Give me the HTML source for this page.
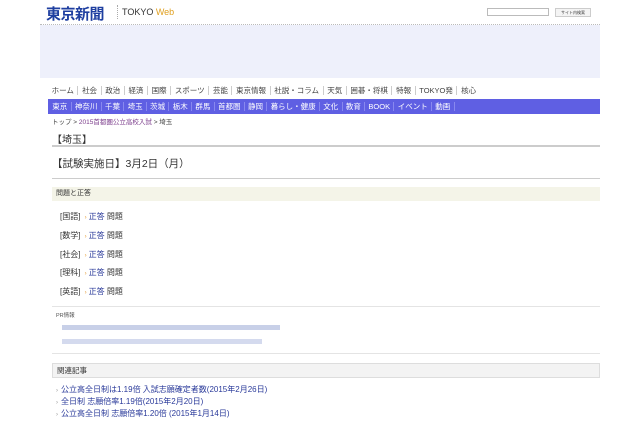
<!DOCTYPE html>
<html><head><meta charset="utf-8"><style>
*{margin:0;padding:0;box-sizing:border-box}
body{width:640px;height:426px;background:#fff;font-family:"Liberation Sans","Noto Sans CJK JP",sans-serif;color:#333;position:relative;overflow:hidden}
.a{position:absolute}
.nav span{padding:0 3.6px;border-right:1px solid #ccc}
.bar span{padding:0 3.3px;border-right:1px solid #8888ee;color:#fff}
.row{position:absolute;left:60px;font-size:8px;color:#333}
.row b{font-weight:normal;color:#2a3a9a}
.row i{font-style:normal;color:#e6a040;font-size:6px;margin:0 2px}
.rl{position:absolute;left:56px;font-size:8px;color:#2a3a9a}
.rl i{font-style:normal;color:#999;font-size:6px;margin-right:3px}
.blur{position:absolute;height:5px;background:#c8d0e8}
</style></head><body>
<div class="a" style="left:46px;top:3px;font-size:15px;font-weight:bold;color:#1f3fa0;letter-spacing:-0.5px">東京新聞</div>
<div class="a" style="left:117px;top:5px;height:14px;border-left:1px dotted #aaa"></div>
<div class="a" style="left:122px;top:7px;font-size:9px;color:#333">TOKYO <span style="color:#e0a020">Web</span></div>
<div class="a" style="left:487px;top:8px;width:62px;height:8px;border:1px solid #bbb"></div>
<div class="a" style="left:555px;top:8px;width:36px;height:9px;border:1px solid #ccc;background:#f4f4f4;font-size:4px;line-height:7px;text-align:center">サイト内検索</div>
<div class="a" style="left:40px;top:24px;width:560px;border-top:1px dotted #bbb"></div>
<div class="a" style="left:40px;top:25px;width:560px;height:53px;background:#eef0fb"></div>
<div class="a nav" style="left:48px;top:86px;font-size:7.5px;color:#444;white-space:nowrap;line-height:10px"><span>ホーム</span><span>社会</span><span>政治</span><span>経済</span><span>国際</span><span>スポーツ</span><span>芸能</span><span>東京情報</span><span>社説・コラム</span><span>天気</span><span>囲碁・将棋</span><span>特報</span><span>TOKYO発</span><span style="border:0">核心</span></div>
<div class="a bar" style="left:48px;top:99px;width:552px;height:15px;background:#5f5fe3;font-size:7.5px;line-height:15px;white-space:nowrap;padding-left:1px"><span>東京</span><span>神奈川</span><span>千葉</span><span>埼玉</span><span>茨城</span><span>栃木</span><span>群馬</span><span>首都圏</span><span>静岡</span><span>暮らし・健康</span><span>文化</span><span>教育</span><span>BOOK</span><span>イベント</span><span>動画</span></div>
<div class="a" style="left:52px;top:116px;font-size:6.5px;color:#444">トップ &gt; <span style="color:#7a3a8a">2015首都圏公立高校入試</span> &gt; 埼玉</div>
<div class="a" style="left:52px;top:131px;font-size:10px;color:#333">【埼玉】</div>
<div class="a" style="left:52px;top:145px;width:548px;height:2px;background:#ccc"></div>
<div class="a" style="left:52px;top:156px;font-size:10.5px;color:#333">【試験実施日】3月2日（月）</div>
<div class="a" style="left:52px;top:178px;width:548px;height:1px;background:#ccc"></div>
<div class="a" style="left:52px;top:187px;width:548px;height:14px;background:#f4f4e8;font-size:7px;line-height:14px;padding-left:4px">問題と正答</div>
<div class="row" style="top:211px">[国語] <i>›</i><b>正答</b> 問題</div>
<div class="row" style="top:230px">[数学] <i>›</i><b>正答</b> 問題</div>
<div class="row" style="top:249px">[社会] <i>›</i><b>正答</b> 問題</div>
<div class="row" style="top:267px">[理科] <i>›</i><b>正答</b> 問題</div>
<div class="row" style="top:286px">[英語] <i>›</i><b>正答</b> 問題</div>
<div class="a" style="left:52px;top:306px;width:548px;height:1px;background:#e4e4e4"></div>
<div class="a" style="left:56px;top:311px;font-size:5.5px;color:#555">PR情報</div>
<div class="blur" style="left:62px;top:325px;width:218px"></div>
<div class="blur" style="left:62px;top:339px;width:200px;background:#d4daee"></div>
<div class="a" style="left:52px;top:353px;width:548px;height:1px;background:#e4e4e4"></div>
<div class="a" style="left:52px;top:363px;width:548px;height:15px;background:#f3f3f3;border:1px solid #ddd;font-size:7.5px;line-height:13px;padding-left:4px">関連記事</div>
<div class="rl" style="top:384px"><i>›</i>公立高全日制は1.19倍 入試志願確定者数(2015年2月26日)</div>
<div class="rl" style="top:396px"><i>›</i>全日制 志願倍率1.19倍(2015年2月20日)</div>
<div class="rl" style="top:408px"><i>›</i>公立高全日制 志願倍率1.20倍 (2015年1月14日)</div>
</body></html>
